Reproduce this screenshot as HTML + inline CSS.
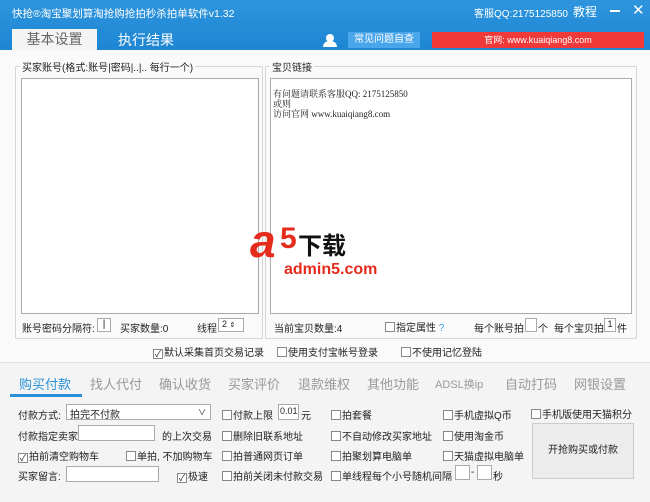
<!DOCTYPE html><html><head><meta charset="utf-8"><style>
*{box-sizing:border-box;margin:0;padding:0}
body{width:650px;height:502px;overflow:hidden;font-family:"Liberation Sans","Noto Sans CJK SC",sans-serif;font-size:10px;color:#222;background:#f4f4f4;position:relative}
.a{position:absolute;white-space:nowrap}
.top{left:0;top:0;width:650px;height:50px;background:linear-gradient(#2e95dd,#1d86d3)}
.cb{display:inline-block;width:10px;height:10px;border:1px solid #888;background:#fff;vertical-align:-1px;margin-right:1px;font-size:9px;line-height:8px;text-align:center}
.in{position:absolute;background:#fff;border:1px solid #aaa}
.g{position:absolute;border:1px solid #d6d6d6;border-radius:2px}
.t{color:#999;font-size:13px}
</style></head><body>
<div class="a top"></div>
<div class="a" style="left:12px;top:6px;color:#fff;font-size:10.5px">快抢®淘宝聚划算淘抢购抢拍秒杀拍单软件v1.32</div>
<div class="a" style="left:474px;top:5px;color:#fff;font-size:10px">客服QQ:2175125850</div>
<div class="a" style="left:573px;top:3px;color:#fff;font-size:12px">教程</div>
<div class="a" style="left:610px;top:10px;width:10px;height:2px;background:#fff"></div>
<div class="a" style="left:632px;top:1px;color:#fff;font-size:15px">✕</div>
<div class="a" style="left:12px;top:29px;width:85px;height:21px;background:#f4f4f4;color:#666;font-size:14px;text-align:center;line-height:21px">基本设置</div>
<div class="a" style="left:118px;top:30px;color:#fff;font-size:14px">执行结果</div>
<div class="a" style="left:326px;top:34px;width:8px;height:8px;border-radius:50%;background:#fff"></div>
<div class="a" style="left:323px;top:41px;width:14px;height:6px;border-radius:6px 6px 0 0;background:#fff"></div>
<div class="a" style="left:348px;top:32px;width:72px;height:16px;background:#4aa6ea;color:#fff;font-size:10px;text-align:center;line-height:16px">常见问题自查</div>
<div class="a" style="left:432px;top:32px;width:212px;height:16px;background:#f03a3a;color:#fff;font-size:9px;text-align:center;line-height:16px">官网: www.kuaiqiang8.com</div>
<div class="a" style="left:0;top:50px;width:650px;height:312px;background:#fafafa"></div>
<div class="g" style="left:15px;top:66px;width:248px;height:273px"></div>
<div class="a" style="left:20px;top:59px;background:#fafafa;padding:0 2px">买家账号(格式:账号|密码|..|.. 每行一个)</div>
<div class="in" style="left:21px;top:78px;width:238px;height:236px"></div>
<div class="g" style="left:265px;top:66px;width:372px;height:273px"></div>
<div class="a" style="left:270px;top:59px;background:#fafafa;padding:0 2px">宝贝链接</div>
<div class="in" style="left:270px;top:78px;width:362px;height:236px"></div>
<div class="a" style="left:273px;top:89px;font-family:'Liberation Serif','Noto Serif CJK SC',serif;font-size:9px;line-height:10px">有问题请联系客服QQ: 2175125850<br>或则<br>访问官网 www.kuaiqiang8.com</div>
<div class="a" style="left:250px;top:218px;font-size:46px;font-weight:bold;font-style:italic;color:#e52b1c;line-height:46px">a</div>
<div class="a" style="left:280px;top:224px;font-size:30px;font-weight:bold;color:#e52b1c;line-height:30px">5</div>
<div class="a" style="left:298px;top:230px;font-size:24px;font-weight:bold;color:#111;font-family:'Noto Sans CJK SC',sans-serif;line-height:28px">下载</div>
<div class="a" style="left:284px;top:261px;font-size:16px;font-weight:bold;color:#e52b1c">admin5.com</div>
<div class="a" style="left:22px;top:320px">账号密码分隔符:</div>
<div class="in" style="left:97px;top:318px;width:14px;height:14px;font-size:10px;text-align:center">|</div>
<div class="a" style="left:120px;top:320px">买家数量:0</div>
<div class="a" style="left:197px;top:320px">线程</div>
<div class="in" style="left:218px;top:318px;width:26px;height:14px;font-size:9px;padding-left:3px">2 <span style="font-size:7px">⇕</span></div>
<div class="a" style="left:274px;top:320px">当前宝贝数量:4</div>
<div class="a" style="left:385px;top:319px"><span class="cb"></span>指定属性 <span style="color:#3b9ce0">?</span></div>
<div class="a" style="left:474px;top:320px">每个账号拍</div>
<div class="in" style="left:525px;top:318px;width:12px;height:14px"></div>
<div class="a" style="left:538px;top:320px">个</div>
<div class="a" style="left:554px;top:320px">每个宝贝拍</div>
<div class="in" style="left:604px;top:318px;width:12px;height:14px;font-size:9px;text-align:center">1</div>
<div class="a" style="left:617px;top:320px">件</div>
<div class="a" style="left:153px;top:344px"><span class="cb">✓</span>默认采集首页交易记录</div>
<div class="a" style="left:277px;top:344px"><span class="cb"></span>使用支付宝帐号登录</div>
<div class="a" style="left:401px;top:344px"><span class="cb"></span>不使用记忆登陆</div>
<div class="a" style="left:0;top:362px;width:650px;height:1px;background:#ddd"></div>
<div class="a t" style="left:19px;top:374px;color:#2a90d8">购买付款</div>
<div class="a" style="left:10px;top:394px;width:72px;height:3px;background:#2a90d8"></div>
<div class="a t" style="left:90px;top:374px">找人代付</div>
<div class="a t" style="left:159px;top:374px">确认收货</div>
<div class="a t" style="left:228px;top:374px">买家评价</div>
<div class="a t" style="left:298px;top:374px">退款维权</div>
<div class="a t" style="left:367px;top:374px">其他功能</div>
<div class="a t" style="left:435px;top:374px;font-size:11px;top:376px">ADSL换ip</div>
<div class="a t" style="left:505px;top:374px">自动打码</div>
<div class="a t" style="left:574px;top:374px">网银设置</div>
<div class="a" style="left:18px;top:407px">付款方式:</div>
<div class="in" style="left:66px;top:404px;width:145px;height:16px;padding:1px 3px">拍完不付款<span style="position:absolute;right:4px;font-size:8px;top:2px">∨</span></div>
<div class="a" style="left:18px;top:428px">付款指定卖家</div>
<div class="in" style="left:78px;top:425px;width:77px;height:16px"></div>
<div class="a" style="left:162px;top:428px">的上次交易</div>
<div class="a" style="left:18px;top:448px"><span class="cb">✓</span>拍前清空购物车</div>
<div class="a" style="left:126px;top:448px"><span class="cb"></span>单拍, 不加购物车</div>
<div class="a" style="left:18px;top:468px">买家留言:</div>
<div class="in" style="left:66px;top:466px;width:93px;height:16px"></div>
<div class="a" style="left:177px;top:468px"><span class="cb">✓</span>极速</div>
<div class="a" style="left:222px;top:407px"><span class="cb"></span>付款上限</div>
<div class="in" style="left:278px;top:404px;width:21px;height:16px;font-size:9px;padding:1px 1px">0.01</div>
<div class="a" style="left:301px;top:407px">元</div>
<div class="a" style="left:222px;top:428px"><span class="cb"></span>删除旧联系地址</div>
<div class="a" style="left:222px;top:448px"><span class="cb"></span>拍普通网页订单</div>
<div class="a" style="left:222px;top:468px"><span class="cb"></span>拍前关闭未付款交易</div>
<div class="a" style="left:331px;top:407px"><span class="cb"></span>拍套餐</div>
<div class="a" style="left:331px;top:428px"><span class="cb"></span>不自动修改买家地址</div>
<div class="a" style="left:331px;top:448px"><span class="cb"></span>拍聚划算电脑单</div>
<div class="a" style="left:331px;top:468px"><span class="cb"></span>单线程每个小号随机间隔</div>
<div class="in" style="left:455px;top:465px;width:15px;height:15px"></div>
<div class="a" style="left:471px;top:467px">-</div>
<div class="in" style="left:477px;top:465px;width:15px;height:15px"></div>
<div class="a" style="left:493px;top:468px">秒</div>
<div class="a" style="left:443px;top:407px"><span class="cb"></span>手机虚拟Q币</div>
<div class="a" style="left:443px;top:428px"><span class="cb"></span>使用淘金币</div>
<div class="a" style="left:443px;top:448px"><span class="cb"></span>天猫虚拟电脑单</div>
<div class="a" style="left:531px;top:406px"><span class="cb"></span>手机版使用天猫积分</div>
<div class="a" style="left:532px;top:423px;width:102px;height:56px;border:1px solid #ccc;background:#ececec;text-align:center;line-height:54px">开抢购买或付款</div>
</body></html>
